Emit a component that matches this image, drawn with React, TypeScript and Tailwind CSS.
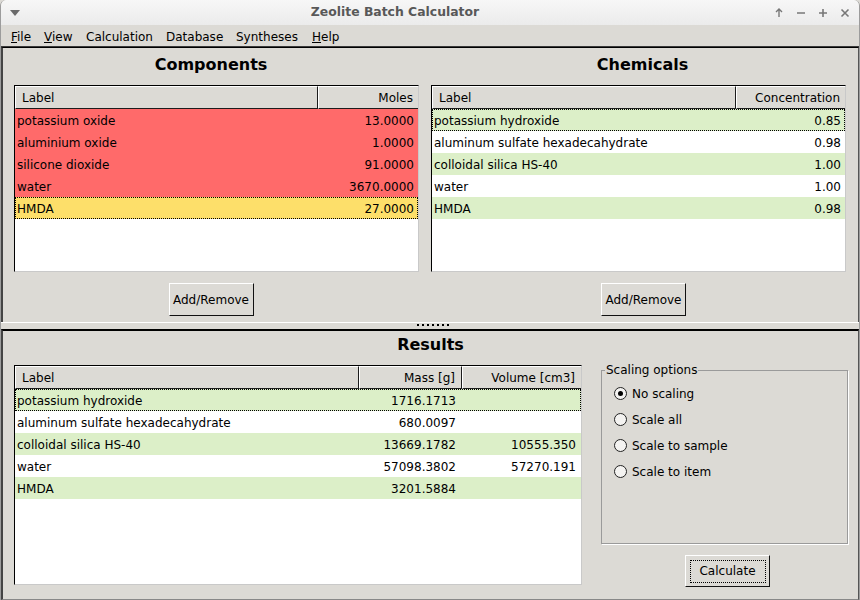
import React from "react";

type Row = { cells: string[]; bg: string; selected?: boolean };
type Col = { title: string; width: number; align: "left" | "right" };

const RED = "#ff6a6a";
const YEL = "#fddf6a";
const GRN = "#dcefc8";
const WHT = "#ffffff";

function Table({ cols, rows, width, height }: { cols: Col[]; rows: Row[]; width: number; height: number }) {
  return (
    <div
      className="bg-white border-l border-t border-black border-r border-b border-r-[#c9c9c9] border-b-[#c9c9c9] overflow-hidden"
      style={{ width, height }}
    >
      <div className="flex h-[23px]">
        {cols.map((c, i) => (
          <div
            key={i}
            className={
              "h-[23px] bg-[#dcdad5] border-t border-l border-t-white border-l-white border-r border-b border-r-[#1c1c1c] border-b-[#1c1c1c] flex items-center px-[6px] " +
              (c.align === "right" ? "justify-end" : "justify-start")
            }
            style={{ width: c.width, flexShrink: 0, flexGrow: i === cols.length - 1 ? 1 : 0 }}
          >
            {c.title}
          </div>
        ))}
      </div>
      {rows.map((r, ri) => (
        <div
          key={ri}
          className={
            "flex h-[22px] items-center pt-[1px] " +
            (r.selected ? "border border-dotted border-black" : "border border-transparent")
          }
          style={{ backgroundColor: r.bg }}
        >
          {r.cells.map((t, i) => (
            <div
              key={i}
              className={
                "flex items-center " +
                (cols[i].align === "right" ? "justify-end pr-[6px]" : "justify-start pl-[1px]")
              }
              style={{ width: i === 0 ? cols[i].width - 1 : cols[i].width, flexShrink: 0, flexGrow: i === cols.length - 1 ? 1 : 0 }}
            >
              {t}
            </div>
          ))}
        </div>
      ))}
    </div>
  );
}

function Button({ label, focus, w, h }: { label: string; focus?: boolean; w: number; h: number }) {
  return (
    <div
      className="bg-[#dcdad5] border-t border-l border-t-white border-l-white border-r border-b border-r-[#111] border-b-[#111] flex items-center justify-center"
      style={{ width: w, height: h }}
    >
      {focus ? (
        <div className="border border-dotted border-black w-[76px] h-[23px] flex items-center justify-center">{label}</div>
      ) : (
        label
      )}
    </div>
  );
}

function Radio({ label, checked }: { label: string; checked?: boolean }) {
  return (
    <div className="flex items-center h-[26px]">
      <div className="w-[13px] h-[13px] rounded-full border border-[#222] bg-[#f4f3f1] flex items-center justify-center ml-[12px]">
        {checked && <div className="w-[5px] h-[5px] rounded-full bg-black" />}
      </div>
      <span className="ml-[5px] pt-[1px]">{label}</span>
    </div>
  );
}

export default function App() {
  const compRows: Row[] = [
    { cells: ["potassium oxide", "13.0000"], bg: RED },
    { cells: ["aluminium oxide", "1.0000"], bg: RED },
    { cells: ["silicone dioxide", "91.0000"], bg: RED },
    { cells: ["water", "3670.0000"], bg: RED },
    { cells: ["HMDA", "27.0000"], bg: YEL, selected: true },
  ];
  const chemRows: Row[] = [
    { cells: ["potassium hydroxide", "0.85"], bg: GRN, selected: true },
    { cells: ["aluminum sulfate hexadecahydrate", "0.98"], bg: WHT },
    { cells: ["colloidal silica HS-40", "1.00"], bg: GRN },
    { cells: ["water", "1.00"], bg: WHT },
    { cells: ["HMDA", "0.98"], bg: GRN },
  ];
  const resRows: Row[] = [
    { cells: ["potassium hydroxide", "1716.1713", ""], bg: GRN, selected: true },
    { cells: ["aluminum sulfate hexadecahydrate", "680.0097", ""], bg: WHT },
    { cells: ["colloidal silica HS-40", "13669.1782", "10555.350"], bg: GRN },
    { cells: ["water", "57098.3802", "57270.191"], bg: WHT },
    { cells: ["HMDA", "3201.5884", ""], bg: GRN },
  ];

  return (
    <div className="w-[860px] h-[600px] overflow-hidden bg-[#dcdad5] text-[12px] text-black font-['DejaVu_Sans',sans-serif] leading-none">
      <div className="w-[860px] h-[600px] flex flex-col border-l border-r border-[#9c9c9c] rounded-t-[6px] overflow-hidden">
        {/* Title bar */}
        <div className="h-[25px] bg-gradient-to-b from-[#f7f7f7] to-[#ebebeb] flex items-center relative shrink-0">
          <svg className="absolute left-[9px] top-[10px]" width="10" height="6" viewBox="0 0 10 6">
            <path d="M0 0 L10 0 L5 6 Z" fill="#6a6a6a" />
          </svg>
          <div className="flex-1 text-center font-bold text-[12.4px] text-[#585858] pr-[70px]">Zeolite Batch Calculator</div>
          <div className="absolute right-[8px] top-0 h-[25px] flex items-center gap-[10px] text-[#777]">
            <svg width="12" height="12" viewBox="0 0 12 12"><path d="M6 10 V2 M3 5 L6 2 L9 5" stroke="#777" strokeWidth="1.4" fill="none" /></svg>
            <svg width="12" height="12" viewBox="0 0 12 12"><path d="M2 6 H10" stroke="#777" strokeWidth="1.6" /></svg>
            <svg width="12" height="12" viewBox="0 0 12 12"><path d="M2 6 H10 M6 2 V10" stroke="#777" strokeWidth="1.6" /></svg>
            <svg width="12" height="12" viewBox="0 0 12 12"><path d="M2.5 2.5 L9.5 9.5 M9.5 2.5 L2.5 9.5" stroke="#777" strokeWidth="1.6" /></svg>
          </div>
        </div>
        {/* Menu bar */}
        <div className="h-[22px] flex items-center shrink-0 pl-[10px] pt-[2px] border-b border-[#3a3a3a] text-[12px]">
          <span className="w-[33px]"><span className="underline">F</span>ile</span>
          <span className="w-[42px]"><span className="underline">V</span>iew</span>
          <span className="w-[80px]">Calculation</span>
          <span className="w-[70px]">Database</span>
          <span className="w-[76px]">Syntheses</span>
          <span><span className="underline">H</span>elp</span>
        </div>
        {/* Top pane */}
        <div className="h-[275px] shrink-0 border-t border-l-2 border-t-black border-l-[#444] border-r border-r-[#555] flex pl-[11px]">
          <div className="w-[405px] flex flex-col items-center">
            <div className="h-[37px] flex items-center justify-center font-bold text-[16px] pb-[3px] mr-[11px]">Components</div>
            <Table
              cols={[
                { title: "Label", width: 303, align: "left" },
                { title: "Moles", width: 102, align: "right" },
              ]}
              rows={compRows}
              width={405}
              height={187}
            />
            <div className="mt-[11px] mr-[11px]">
              <Button label="Add/Remove" w={85} h={33} />
            </div>
          </div>
          <div className="w-[12px]" />
          <div className="w-[415px] flex flex-col items-center">
            <div className="h-[37px] flex items-center justify-center font-bold text-[16px] pb-[3px] ml-[8px]">Chemicals</div>
            <Table
              cols={[
                { title: "Label", width: 304, align: "left" },
                { title: "Concentration", width: 111, align: "right" },
              ]}
              rows={chemRows}
              width={415}
              height={187}
            />
            <div className="mt-[11px] ml-[10px]">
              <Button label="Add/Remove" w={85} h={33} />
            </div>
          </div>
        </div>
        {/* Splitter */}
        <div className="h-[7px] shrink-0 border-t border-white relative">
          <div className="absolute left-[416px] top-[1px] flex gap-[3px]">
            {Array.from({ length: 7 }).map((_, i) => (
              <div key={i} className="w-[2px] h-[2px] bg-black" />
            ))}
          </div>
        </div>
        {/* Bottom pane */}
        <div className="flex-1 border-t-2 border-l-2 border-t-black border-l-[#444] border-r border-r-[#555] border-b border-b-[#888] flex flex-col">
          <div className="h-[34px] flex items-center justify-center font-bold text-[16px] pb-[6px]">Results</div>
          <div className="flex pl-[11px]">
            <Table
              cols={[
                { title: "Label", width: 344, align: "left" },
                { title: "Mass [g]", width: 103, align: "right" },
                { title: "Volume [cm3]", width: 120, align: "right" },
              ]}
              rows={resRows}
              width={568}
              height={220}
            />
            <div className="ml-[19px] flex flex-col items-center">
              <div className="mt-[5px] relative w-[247px] h-[174px] border border-[#9a9a9a] shadow-[1px_1px_0_#fff]">
                <div className="absolute -top-[7px] left-[3px] bg-[#dcdad5] px-[1px]">Scaling options</div>
                <div className="pt-[9px]">
                  <Radio label="No scaling" checked />
                  <Radio label="Scale all" />
                  <Radio label="Scale to sample" />
                  <Radio label="Scale to item" />
                </div>
              </div>
              <div className="mt-[11px] ml-[6px]">
                <Button label="Calculate" focus w={85} h={32} />
              </div>
            </div>
          </div>
        </div>
      </div>
    </div>
  );
}
